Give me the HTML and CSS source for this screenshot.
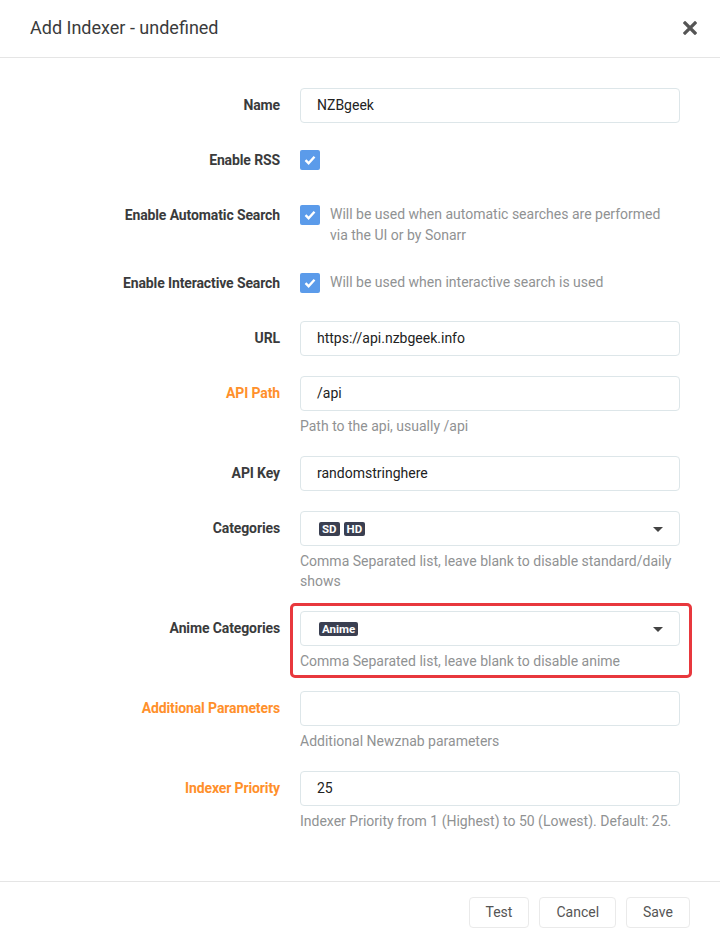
FILE: index.html
```html
<!DOCTYPE html>
<html>
<head>
<meta charset="utf-8">
<link rel="stylesheet" href="styles.css">
</head>
<body>
<div class="modal">
  <div class="modal-header">
    <div class="title">Add Indexer - undefined</div>
    <button class="close" aria-label="Close">
      <svg width="14" height="14" viewBox="0 0 14 14"><path d="M2 2 L12 12 M12 2 L2 12" stroke="#555" stroke-width="3.2" stroke-linecap="square"/></svg>
    </button>
  </div>
  <div class="modal-body">
    <div class="group">
      <label class="label">Name</label>
      <div class="control"><div class="input">NZBgeek</div></div>
    </div>
    <div class="group">
      <label class="label">Enable RSS</label>
      <div class="control check-row"><span class="checkbox"><svg width="12" height="10" viewBox="0 0 12 10"><path d="M1.5 5.2 L4.6 8.2 L10.5 1.8" fill="none" stroke="#fff" stroke-width="2.4"/></svg></span></div>
    </div>
    <div class="group">
      <label class="label">Enable Automatic Search</label>
      <div class="control check-row"><span class="checkbox"><svg width="12" height="10" viewBox="0 0 12 10"><path d="M1.5 5.2 L4.6 8.2 L10.5 1.8" fill="none" stroke="#fff" stroke-width="2.4"/></svg></span><span class="check-help">Will be used when automatic searches are performed via the UI or by Sonarr</span></div>
    </div>
    <div class="group">
      <label class="label">Enable Interactive Search</label>
      <div class="control check-row"><span class="checkbox"><svg width="12" height="10" viewBox="0 0 12 10"><path d="M1.5 5.2 L4.6 8.2 L10.5 1.8" fill="none" stroke="#fff" stroke-width="2.4"/></svg></span><span class="check-help">Will be used when interactive search is used</span></div>
    </div>
    <div class="group">
      <label class="label">URL</label>
      <div class="control"><div class="input">https://api.nzbgeek.info</div></div>
    </div>
    <div class="group">
      <label class="label advanced">API Path</label>
      <div class="control"><div class="input">/api</div><div class="help">Path to the api, usually /api</div></div>
    </div>
    <div class="group">
      <label class="label">API Key</label>
      <div class="control"><div class="input">randomstringhere</div></div>
    </div>
    <div class="group">
      <label class="label">Categories</label>
      <div class="control">
        <div class="input select"><span class="tags"><span class="tag">SD</span><span class="tag">HD</span></span><span class="caret"></span></div>
        <div class="help">Comma Separated list, leave blank to disable standard/daily shows</div>
      </div>
    </div>
    <div class="group">
      <label class="label">Anime Categories</label>
      <div class="control highlighted">
        <div class="input select"><span class="tags"><span class="tag">Anime</span></span><span class="caret"></span></div>
        <div class="help">Comma Separated list, leave blank to disable anime</div>
        <div class="highlight"></div>
      </div>
    </div>
    <div class="group">
      <label class="label advanced">Additional Parameters</label>
      <div class="control"><div class="input"></div><div class="help">Additional Newznab parameters</div></div>
    </div>
    <div class="group">
      <label class="label advanced">Indexer Priority</label>
      <div class="control"><div class="input">25</div><div class="help">Indexer Priority from 1 (Highest) to 50 (Lowest). Default: 25.</div></div>
    </div>
  </div>
  <div class="modal-footer">
    <button class="btn">Test</button>
    <button class="btn">Cancel</button>
    <button class="btn">Save</button>
  </div>
</div>
</body>
</html>
```

FILE: styles.css
```css
* { box-sizing: border-box; }
html, body { margin: 0; padding: 0; background: #fff; }
body {
  font-family: Roboto, "Open Sans", "Liberation Sans", sans-serif;
  font-size: 14px;
  color: #515253;
}
.modal { width: 720px; }
.modal-header {
  display: flex;
  align-items: center;
  justify-content: space-between;
  height: 58px;
  padding: 0 23px 0 30px;
  border-bottom: 1px solid #e5e5e5;
}
.title {
  font-size: 18px;
  font-weight: 400;
  color: #3a3b3c;
  padding-bottom: 3px;
}
.close {
  border: 0;
  background: none;
  padding: 0;
  width: 14px;
  height: 14px;
  display: flex;
  margin-bottom: 2px;
}
.modal-body {
  padding: 30px 40px 30px 30px;
}
.group {
  display: flex;
  margin-bottom: 20px;
}
.label {
  flex: 0 0 250px;
  margin-right: 20px;
  text-align: right;
  font-weight: 700;
  line-height: 35px;
  color: #3a3b3c;
  letter-spacing: -0.12px;
}
.label.advanced { color: #ff902b; }
.control {
  flex: 1 1 auto;
  min-width: 0;
}
.input {
  height: 35px;
  border: 1px solid #dde6e9;
  border-radius: 4px;
  padding: 0 16px;
  line-height: 33px;
  color: #222;
  background: #fff;
}
.select {
  display: flex;
  align-items: center;
  justify-content: space-between;
  padding-left: 18px;
  padding-right: 16px;
}
.tags { display: flex; gap: 4px; }
.tag {
  display: inline-block;
  background: #3a3f51;
  color: #fff;
  font-size: 11.5px;
  font-weight: 700;
  line-height: 14px;
  padding: 0 3px;
  border-radius: 2px;
}
.caret {
  width: 0;
  height: 0;
  border-left: 5px solid transparent;
  border-right: 5px solid transparent;
  border-top: 5px solid #444;
  margin-top: 1px;
}
.help {
  margin-top: 5px;
  line-height: 20px;
  color: #909293;
}
.check-row {
  display: flex;
  align-items: flex-start;
  min-height: 35px;
}
.checkbox {
  flex: 0 0 20px;
  width: 20px;
  height: 20px;
  margin-top: 7px;
  background: #5b9bea;
  border-radius: 2px;
  display: flex;
  align-items: center;
  justify-content: center;
}
.check-help {
  margin-left: 10px;
  margin-top: 6px;
  line-height: 21px;
  color: #909293;
  padding-right: 16px;
}
.highlighted { position: relative; }
.highlight {
  position: absolute;
  left: -10px;
  right: -12px;
  top: -8px;
  bottom: -7px;
  border: 3px solid #e8383d;
  border-radius: 5px;
  pointer-events: none;
}
.modal-footer {
  display: flex;
  justify-content: flex-end;
  gap: 10px;
  padding: 15px 30px;
  border-top: 1px solid #e5e5e5;
}
.btn {
  font-family: Roboto, "Open Sans", "Liberation Sans", sans-serif;
  font-size: 14px;
  color: #555;
  background: #fff;
  border: 1px solid #eaeaea;
  border-radius: 4px;
  height: 31px;
  padding: 0 16px;
  line-height: 29px;
}
```
